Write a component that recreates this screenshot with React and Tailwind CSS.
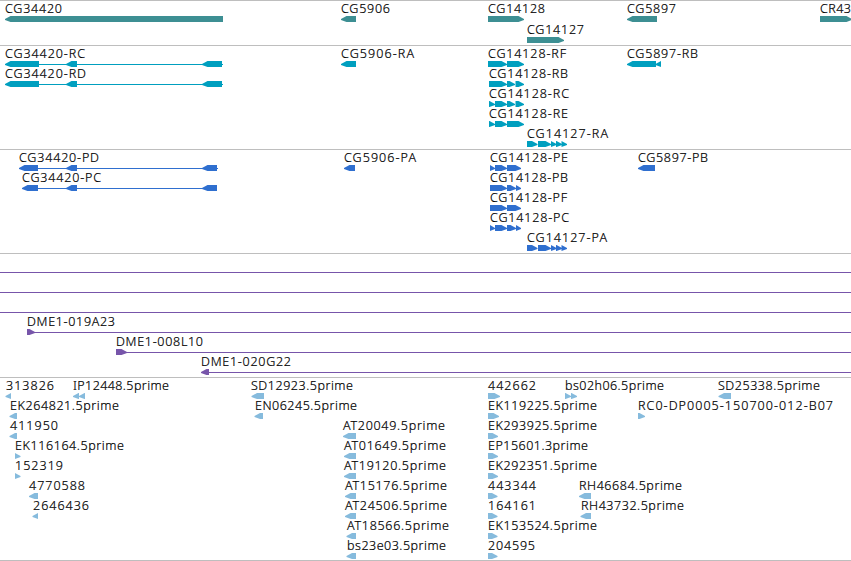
import React from 'react';

// feature: [label, start, end, exons, line]
// label is drawn between start and end, exons are [from, to, strand]
const tracks = [
  {
    name: 'genes',
    color: 'text-[#3d8f93]',
    className: 'h-11 gap-px',
    rows: [
      [
        ['CG34420', 5, 62, [[5, 223, -1]]],
        ['CG5906', 341, 390, [[341, 356, -1]]],
        ['CG14128', 488, 545, [[488, 524, 1]]],
        ['CG5897', 627, 676, [[627, 657, -1]]],
        ['CR43', 820, 851, [[820, 852, 1]]],
      ],
      [['CG14127', 527, 584, [[527, 564, 1]]]],
    ],
  },
  {
    name: 'transcripts',
    color: 'text-[#009fbf]',
    className: 'pb-[3px]',
    rows: [
      [
        ['CG34420-RC', 5, 85, [[5, 39, -1], [66, 77, -1], [202, 222, -1]], [5, 223]],
        ['CG5906-RA', 341, 414, [[341, 356, -1]]],
        ['CG14128-RF', 488, 566, [[488, 507, 1], [507, 524, 1]]],
        ['CG5897-RB', 627, 698, [[627, 656, -1], [655.5, 661, -1]]],
      ],
      [
        ['CG34420-RD', 5, 86, [[5, 39, -1], [66, 77, -1], [202, 222, -1]], [5, 223]],
        ['CG14128-RB', 489, 568, [[489, 507, 1], [507, 515, 1], [515.5, 524, 1]]],
      ],
      [['CG14128-RC', 489, 569, [[489, 495, 1], [495, 507, 1], [507, 515, 1], [515.5, 524, 1]]]],
      [['CG14128-RE', 489, 568, [[489, 495, 1], [495, 507, 1], [507, 524, 1]]]],
      [['CG14127-RA', 527, 608, [[527, 537.5, 1], [538, 551, 1], [551, 556.5, 1], [556, 562, 1], [561.5, 567, 1]]]],
    ],
  },
  {
    name: 'proteins',
    color: 'text-[#2f6fcf]',
    className: 'pb-[3px]',
    rows: [
      [
        ['CG34420-PD', 19, 99, [[19, 38, -1], [66, 77, -1], [202, 217, -1]], [19, 218]],
        ['CG5906-PA', 344, 416, [[344, 355, -1]]],
        ['CG14128-PE', 490, 568, [[490, 495, 1], [495, 507, 1], [507, 521, 1]]],
        ['CG5897-PB', 638, 708, [[638, 655, -1]]],
      ],
      [
        ['CG34420-PC', 22, 101, [[22, 38, -1], [66, 77, -1], [202, 217, -1]], [22, 217]],
        ['CG14128-PB', 490, 568, [[490, 507, 1], [507, 516, 1], [516, 521, 1]]],
      ],
      [['CG14128-PF', 490, 567, [[490, 507, 1], [507, 521, 1]]]],
      [['CG14128-PC', 490, 569, [[490, 495, 1], [495, 507, 1], [507, 516, 1], [516, 521, 1]]]],
      [['CG14127-PA', 527, 607, [[527, 537.5, 1], [538, 551, 1], [551, 556.5, 1], [556, 562, 1], [561.5, 567, 1]]]],
    ],
  },
  {
    name: 'clones',
    color: 'text-[#7755aa]',
    className: 'pb-[3px]',
    rows: [
      [['', 0, 0, [], [0, 851]]],
      [['', 0, 0, [], [0, 851]]],
      [['', 0, 0, [], [0, 851]]],
      [['DME1-019A23', 27, 115, [[27, 35, 1]], [27, 851]]],
      [['DME1-008L10', 116, 203, [[116, 127, 1]], [116, 851]]],
      [['DME1-020G22', 201, 291, [[201, 209, -1]], [201, 851]]],
    ],
  },
  {
    name: 'ests',
    color: 'text-[#86bbdd]',
    className: 'pb-[2px]',
    rows: [
      [
        ['313826', 6, 54, [[5.5, 11, -1]]],
        ['IP12448.5prime', 73, 169, [[73, 79, -1], [79, 85, -1]]],
        ['SD12923.5prime', 251, 353, [[251.5, 264, -1]]],
        ['442662', 488, 536, [[488, 500, 1]]],
        ['bs02h06.5prime', 565, 664, [[565, 571, 1], [571, 577, 1]]],
        ['SD25338.5prime', 718, 820, [[718.5, 731, -1]]],
      ],
      [
        ['EK264821.5prime', 10, 119, [[9.5, 17, -1]]],
        ['EN06245.5prime', 255, 357, [[254.5, 263, -1]]],
        ['EK119225.5prime', 488, 597, [[488, 499, 1]]],
        ['RC0-DP0005-150700-012-B07', 638, 833, [[638, 645, 1]]],
      ],
      [
        ['411950', 10, 58, [[9.5, 17, -1]]],
        ['AT20049.5prime', 343, 445, [[343, 356, -1]]],
        ['EK293925.5prime', 488, 597, [[488, 498, 1]]],
      ],
      [
        ['EK116164.5prime', 15, 124, [[15, 20.5, 1]]],
        ['AT01649.5prime', 344, 446, [[344, 356, -1]]],
        ['EP15601.3prime', 488, 588, [[488, 498, 1]]],
      ],
      [
        ['152319', 15, 63, [[15, 20.5, 1]]],
        ['AT19120.5prime', 344, 446, [[344, 356, -1]]],
        ['EK292351.5prime', 488, 597, [[488, 498, 1]]],
      ],
      [
        ['4770588', 29, 85, [[29, 38, -1]]],
        ['AT15176.5prime', 345, 447, [[345, 356, -1]]],
        ['443344', 488, 536, [[488, 497.5, 1]]],
        ['RH46684.5prime', 579, 682, [[579, 591, -1]]],
      ],
      [
        ['2646436', 33, 89, [[32.5, 38, -1]]],
        ['AT24506.5prime', 345, 447, [[345, 356, -1]]],
        ['164161', 488, 536, [[488, 497.5, 1]]],
        ['RH43732.5prime', 581, 684, [[580.5, 591, -1]]],
      ],
      [
        ['AT18566.5prime', 347, 449, [[346.5, 356, -1]]],
        ['EK153524.5prime', 488, 597, [[488, 497.5, 1]]],
      ],
      [
        ['bs23e03.5prime', 347, 446, [[346.5, 356, -1]]],
        ['204595', 488, 535, [[488, 497.5, 1]]],
      ],
    ],
  },
];

function Exon({ from, to, strand }) {
  // arrow head, short exons are nothing but the head
  const head = Math.min(5.5, to - from);
  const tip = strand < 0 ? from : to;
  const base = strand < 0 ? from + head : to - head;
  const tail = strand < 0 ? to : from;
  return (
    <polygon
      points={`${tip},18 ${base},15 ${tail},15 ${tail},21 ${base},21 ${tip},19`}
      fill="currentColor"
    />
  );
}

function Feature({ label, start, end, exons, line }) {
  return (
    <g>
      {line && <rect x={line[0]} y="18" width={line[1] - line[0]} height="1" fill="currentColor" />}
      {exons.map(([from, to, strand]) => (
        <Exon key={from} from={from} to={to} strand={strand} />
      ))}
      {label && (
        <text x={start} y="12" textLength={end - start} className="fill-black stroke-black stroke-[0.2px]">
          {label}
        </text>
      )}
    </g>
  );
}

function Row({ features }) {
  return (
    <svg width="851" height="20" className="block shrink-0 overflow-visible">
      {features.map(([label, start, end, exons, line], i) => (
        <Feature key={i} label={label} start={start} end={end} exons={exons} line={line} />
      ))}
    </svg>
  );
}

export default function App() {
  return (
    <div className="w-[851px] h-[561px] overflow-hidden bg-white border-b border-[#bebebe] font-['Noto_Sans',sans-serif] font-light text-[12.5px]">
      {tracks.map((track) => (
        <div key={track.name} className="border-t border-[#bebebe]">
          <div className={`flex flex-col ${track.color} ${track.className}`}>
            {track.rows.map((features, i) => (
              <Row key={i} features={features} />
            ))}
          </div>
        </div>
      ))}
    </div>
  );
}
